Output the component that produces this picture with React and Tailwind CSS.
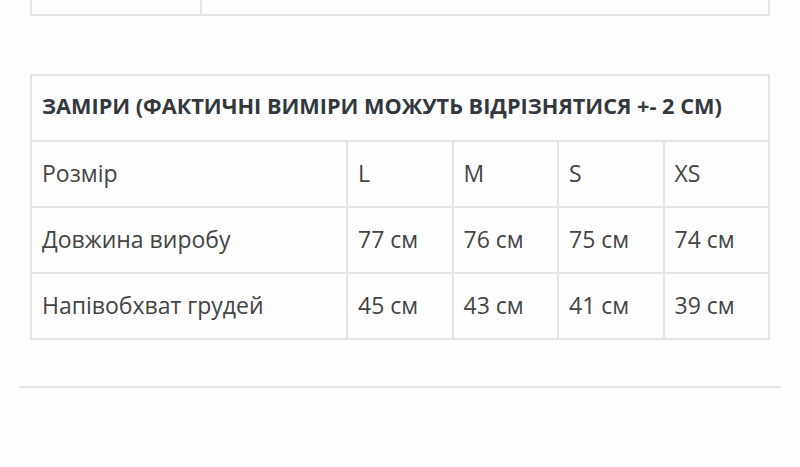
const rows = [
  ["Розмір", "L", "M", "S", "XS"],
  ["Довжина виробу", "77 см", "76 см", "75 см", "74 см"],
  ["Напівобхват грудей", "45 см", "43 см", "41 см", "39 см"],
];

export default function App() {
  return (
    <div className="min-h-[467px] bg-[#fdfdfd] font-['Open_Sans',sans-serif] text-[#444]">
      <div className="px-[30px]">
        {/* tail of the previous table */}
        <table className="w-full border-collapse">
          <tbody>
            <tr className="h-[15px]">
              <td className="w-[170px] border-2 border-t-0 border-[#e4e4e4]"></td>
              <td className="border-2 border-t-0 border-[#e4e4e4]"></td>
            </tr>
          </tbody>
        </table>

        <table className="mt-[58px] w-full table-fixed border-collapse">
          <colgroup>
            <col className="w-[316px]" />
            <col />
            <col />
            <col />
            <col />
          </colgroup>
          <tbody>
            <tr className="h-[66px]">
              <th
                colSpan={5}
                className="whitespace-nowrap border-2 border-[#e4e4e4] px-[10px] pb-[4px] text-left text-[21.7px] font-bold text-[#33383d]"
              >
                ЗАМІРИ (ФАКТИЧНІ ВИМІРИ МОЖУТЬ ВІДРІЗНЯТИСЯ +- 2 СМ)
              </th>
            </tr>
            {rows.map((row, i) => (
              <tr key={i} className="h-[66px]">
                {row.map((cell, j) => (
                  <td
                    key={j}
                    className="whitespace-nowrap border-2 border-[#e4e4e4] px-[10px] pb-[2px] text-[23px]"
                  >
                    {cell}
                  </td>
                ))}
              </tr>
            ))}
          </tbody>
        </table>
      </div>

      <div className="mx-[19px] mt-[46px] h-[2px] bg-[#e4e4e4]"></div>
    </div>
  );
}
